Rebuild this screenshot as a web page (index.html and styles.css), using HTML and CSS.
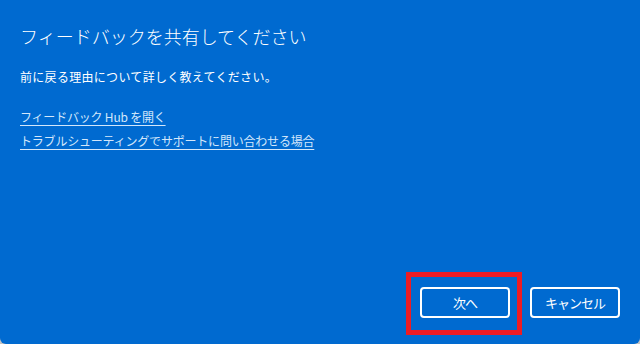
FILE: index.html
```html
<!DOCTYPE html>
<html lang="ja">
<head>
<meta charset="utf-8">
<title>フィードバックを共有してください</title>
<link rel="stylesheet" href="styles.css">
</head>
<body>
<div class="dialog">
  <div class="content">
    <h1 class="title">フィードバックを共有してください</h1>
    <p class="desc">前に戻る理由について詳しく教えてください。</p>
    <div class="links">
      <a class="link" href="#">フィードバック Hub を開く</a>
      <a class="link" href="#">トラブルシューティングでサポートに問い合わせる場合</a>
    </div>
  </div>
  <div class="footer">
    <button class="btn">次へ</button>
    <button class="btn">キャンセル</button>
  </div>
  <div class="highlight"></div>
</div>
</body>
</html>
```
FILE: styles.css
```css
html, body {
  margin: 0;
  padding: 0;
  background: #c4c4c4;
}
body {
  width: 640px;
  height: 344px;
  font-family: "Noto Sans CJK JP", "Noto Sans", sans-serif;
  color: #ffffff;
}
.dialog {
  position: relative;
  width: 640px;
  height: 344px;
  box-sizing: border-box;
  background: #006ad0;
  border-radius: 0 0 6px 6px;
  display: flex;
  flex-direction: column;
  padding: 22px 20px 26px 20px;
}
.content {
  flex: 1;
  display: flex;
  flex-direction: column;
}
.title {
  margin: 0;
  font-size: 18px;
  font-weight: 300;
  line-height: 28px;
}
.desc {
  margin: 17px 0 0 0;
  font-size: 12px;
  line-height: 20px;
  letter-spacing: 0.3px;
}
.links {
  margin-top: 18px;
  display: flex;
  flex-direction: column;
  align-items: flex-start;
}
.link {
  font-size: 12px;
  line-height: 24px;
  letter-spacing: -0.2px;
  color: #d3e7fb;
  text-decoration: underline;
  text-underline-offset: 3px;
}
.footer {
  display: flex;
  justify-content: flex-end;
  gap: 20px;
}
.btn {
  width: 90px;
  height: 31px;
  box-sizing: border-box;
  background: transparent;
  border: 2px solid #ffffff;
  border-radius: 4px;
  color: #ffffff;
  font-family: "Noto Sans CJK JP", "Noto Sans", sans-serif;
  font-size: 13px;
  letter-spacing: -1px;
  padding: 0;
}
.highlight {
  position: absolute;
  left: 406px;
  top: 272px;
  width: 116px;
  height: 63px;
  box-sizing: border-box;
  border: 5px solid #ed1c24;
}
```
